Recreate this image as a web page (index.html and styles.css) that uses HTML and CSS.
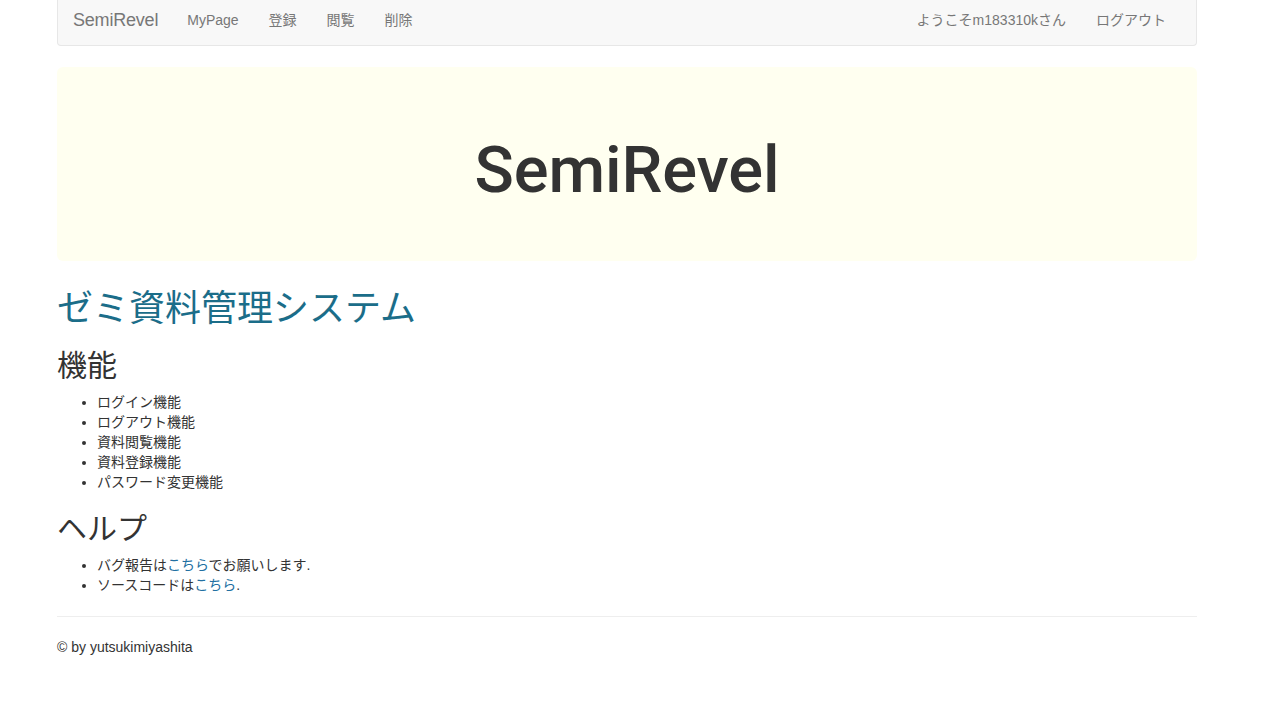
FILE: index.html
```html
<!DOCTYPE html>
<html lang="ja">
<head>
<meta charset="utf-8">
<title>SemiRevel</title>
<link rel="stylesheet" href="styles.css">
</head>
<body>
<div class="container">
  <nav class="navbar">
    <a class="brand" href="#">SemiRevel</a>
    <ul class="nav">
      <li><a href="#">MyPage</a></li>
      <li><a href="#">登録</a></li>
      <li><a href="#">閲覧</a></li>
      <li><a href="#">削除</a></li>
    </ul>
    <ul class="nav nav-right">
      <li><a href="#">ようこそm183310kさん</a></li>
      <li><a href="#">ログアウト</a></li>
    </ul>
  </nav>

  <div class="jumbotron">
    <h1 class="jumbo-title">SemiRevel</h1>
  </div>

  <h1 class="page-title">ゼミ資料管理システム</h1>

  <h2 class="section">機能</h2>
  <ul class="list">
    <li>ログイン機能</li>
    <li>ログアウト機能</li>
    <li>資料閲覧機能</li>
    <li>資料登録機能</li>
    <li>パスワード変更機能</li>
  </ul>

  <h2 class="section">ヘルプ</h2>
  <ul class="list">
    <li>バグ報告は<a class="link" href="#">こちら</a>でお願いします.</li>
    <li>ソースコードは<a class="link" href="#">こちら</a>.</li>
  </ul>

  <hr class="rule">
  <footer class="footer">© by yutsukimiyashita</footer>
</div>
</body>
</html>
```

FILE: styles.css
```css
html, body {
  margin: 0;
  padding: 0;
  background: #fff;
}
body {
  font-family: "Liberation Sans", "Noto Sans CJK JP", sans-serif;
  font-size: 14px;
  line-height: 20px;
  color: #333;
}
a {
  text-decoration: none;
}
.container {
  width: 1140px;
  margin-left: 57px;
}

/* navbar */
.navbar {
  display: flex;
  align-items: flex-start;
  height: 46px;
  box-sizing: border-box;
  background: #f8f8f8;
  border: 1px solid #e7e7e7;
  border-top: 0;
  border-radius: 0 0 4px 4px;
}
.brand {
  display: block;
  padding: 10px 14px 0 15px;
  font-size: 18px;
  line-height: 20px;
  letter-spacing: -0.2px;
  color: #777;
}
.nav {
  display: flex;
  list-style: none;
  margin: 0;
  padding: 0;
}
.nav a {
  display: block;
  padding: 10px 15px 0 15px;
  line-height: 20px;
  color: #777;
  font-size: 14px;
}
.nav-right {
  margin-left: auto;
  margin-right: 15px;
}

/* jumbotron */
.jumbotron {
  margin-top: 21px;
  background: #fffff0;
  border-radius: 6px;
  padding: 69px 60px 56px;
  text-align: center;
}
.jumbo-title {
  margin: 0;
  font-family: "Roboto", "Liberation Sans", sans-serif;
  font-size: 65px;
  line-height: 69px;
  font-weight: 500;
  letter-spacing: -0.1px;
  color: #333;
}

/* headings */
.page-title {
  margin: 28px 0 10px;
  font-size: 36px;
  line-height: 39.6px;
  font-weight: 400;
  color: #1b6d89;
}
.section {
  margin: 20px 0 10px;
  font-size: 30px;
  line-height: 33px;
  font-weight: 400;
  color: #333;
}
.list {
  margin: 0 0 10px;
  padding-left: 40px;
}
.link {
  color: #2270a2;
}
.rule {
  margin: 21px 0 20px;
  border: 0;
  border-top: 1px solid #eee;
  height: 0;
}
.footer {
  line-height: 20px;
}
```
